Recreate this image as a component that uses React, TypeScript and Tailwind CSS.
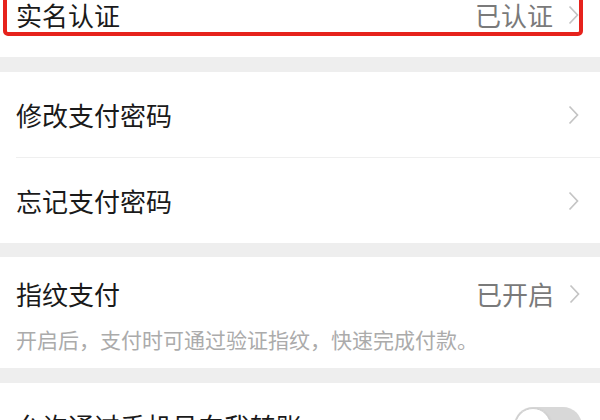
const font = "font-['Noto_Sans_CJK_SC','Noto_Sans',sans-serif]";

function Chevron() {
    return (
        <svg width="11" height="20" viewBox="0 0 11 20" className="shrink-0">
            <polyline points="1.5,1.5 9.5,10 1.5,18.5" fill="none" stroke="#c4c4c4" strokeWidth="1.7" />
        </svg>
    );
}

function Row({ title, value, arrow = true }: { title: string; value?: string; arrow?: boolean }) {
    return (
        <div className="flex h-[85px] items-center justify-between pl-4 pr-[21px]">
            <span className="text-[26px] leading-[34px] text-[#1a1a1a]">{title}</span>
            <div className="flex items-center gap-[15px]">
                {value && <span className="text-[26px] leading-[34px] text-[#7a7a7a]">{value}</span>}
                {arrow && <Chevron />}
            </div>
        </div>
    );
}

export default function App() {
    return (
        <div className={`h-[420px] w-[600px] overflow-hidden bg-[#eeeeee] ${font}`}>
            <div className="relative -mt-[28px] bg-white">
                <Row title="实名认证" value="已认证" />
                <div className="pointer-events-none absolute top-[10px] right-[17px] bottom-[21px] left-[3px] rounded-[5px] border-[4px] border-[#e6221c]" />
            </div>

            <div className="mt-[15px] bg-white">
                <Row title="修改支付密码" />
                <div className="ml-4 h-px bg-[#efefef]" />
                <Row title="忘记支付密码" />
            </div>

            <div className="mt-[14px] bg-white pt-[20px] pb-[15px]">
                <div className="flex items-center justify-between pl-4 pr-[20px]">
                    <span className="text-[26px] leading-[34px] text-[#1a1a1a]">指纹支付</span>
                    <div className="flex items-center gap-[15px]">
                        <span className="text-[26px] leading-[34px] text-[#7a7a7a]">已开启</span>
                        <Chevron />
                    </div>
                </div>
                <p className="mt-[14px] pl-4 text-[21px] leading-[28px] text-[#ababab]">
                    开启后，支付时可通过验证指纹，快速完成付款。
                </p>
            </div>

            <div className="mt-[15px] bg-white">
                <div className="flex h-[85px] items-center justify-between pl-4 pr-[18px]">
                    <span className="text-[26px] leading-[34px] text-[#1a1a1a]">允许通过手机号向我转账</span>
                    <div className="relative h-[38px] w-[68px] rounded-full bg-[#d8d8d8]">
                        <div className="absolute top-[1px] left-[1px] h-[36px] w-[36px] rounded-full border border-[#d0d0d0] bg-white shadow-sm" />
                    </div>
                </div>
            </div>
        </div>
    );
}
